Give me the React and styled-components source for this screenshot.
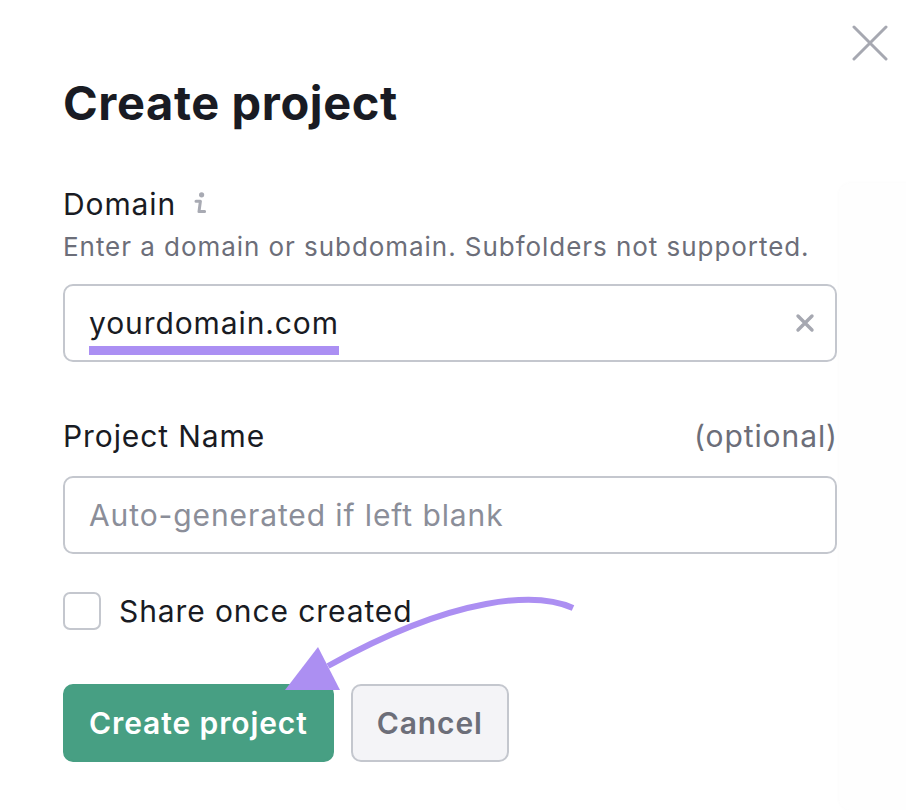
import React from "react";
import styled, { createGlobalStyle } from "styled-components";

const GlobalStyle = createGlobalStyle`
  html, body {
    margin: 0;
    padding: 0;
    background: #ffffff;
  }
  body {
    font-family: Inter, "Noto Sans", "Liberation Sans", sans-serif;
    color: #191b23;
    -webkit-font-smoothing: antialiased;
  }
`;

const CloseIcon = () => (
  <svg width="36" height="36" viewBox="0 0 36 36" fill="none">
    <path d="M2 2L34 34M34 2L2 34" stroke="#a6a8b1" strokeWidth="3" strokeLinecap="round" />
  </svg>
);

const ClearIcon = () => (
  <svg width="20" height="20" viewBox="0 0 20 20" fill="none">
    <path d="M3 3L17 17M17 3L3 17" stroke="#a6a8b1" strokeWidth="3.4" strokeLinecap="round" />
  </svg>
);

const InfoIcon = () => (
  <svg width="12" height="22" viewBox="0 0 12 22" fill="none">
    <circle cx="7.6" cy="2.8" r="2.6" fill="#a8aab3" />
    <path d="M2 9.2H6.4L5 19.6H10.6" stroke="#a8aab3" strokeWidth="3" strokeLinejoin="round" strokeLinecap="round" />
  </svg>
);

const Arrow = () => (
  <Styled.Overlay width="906" height="810" viewBox="0 0 906 810">
    <path d="M573 608C538 592 458 594 328 666" stroke="#ac8ff2" strokeWidth="6" fill="none" />
    <polygon points="285,690 318,647 340,690" fill="#ac8ff2" />
  </Styled.Overlay>
);

export default function App() {
  return (
    <>
      <GlobalStyle />
      <Styled.Page>
        <Styled.BackCard />
        <Styled.Close aria-label="Close">
          <CloseIcon />
        </Styled.Close>
        <Styled.Title>Create project</Styled.Title>

        <Styled.LabelRow $gap="56px">
          <Styled.Label>
            Domain
            <Styled.Info>
              <InfoIcon />
            </Styled.Info>
          </Styled.Label>
        </Styled.LabelRow>
        <Styled.Helper>Enter a domain or subdomain. Subfolders not supported.</Styled.Helper>
        <Styled.Field $gap="22px">
          <Styled.Value>yourdomain.com</Styled.Value>
          <Styled.Clear aria-label="Clear">
            <ClearIcon />
          </Styled.Clear>
        </Styled.Field>

        <Styled.LabelRow $gap="57px">
          <Styled.Label>Project Name</Styled.Label>
          <Styled.Optional>(optional)</Styled.Optional>
        </Styled.LabelRow>
        <Styled.Field $gap="23px">
          <Styled.Placeholder>Auto-generated if left blank</Styled.Placeholder>
        </Styled.Field>

        <Styled.CheckRow>
          <Styled.Checkbox />
          <Styled.CheckLabel>Share once created</Styled.CheckLabel>
        </Styled.CheckRow>

        <Styled.Actions>
          <Styled.Button $primary>Create project</Styled.Button>
          <Styled.Button>Cancel</Styled.Button>
        </Styled.Actions>

        <Arrow />
      </Styled.Page>
    </>
  );
}

const bodyText = `
  font-size: 30px;
  line-height: 34px;
  letter-spacing: 0.9px;
`;

const Styled = {
  Page: styled.div`
    position: relative;
    width: 906px;
    height: 810px;
    box-sizing: border-box;
    padding: 75px 69px 0 63px;
    display: flex;
    flex-direction: column;
    overflow: hidden;
  `,
  BackCard: styled.div`
    position: absolute;
    left: 839px;
    top: 183px;
    right: -20px;
    bottom: 0;
    background: #fefefe;
    border-radius: 12px;
    box-shadow: 0 0 4px rgba(0, 0, 0, 0.025);
    z-index: 0;
  `,
  Close: styled.div`
    position: absolute;
    top: 25px;
    right: 18px;
    width: 36px;
    height: 36px;
    display: flex;
  `,
  Title: styled.h1`
    margin: 0;
    font-size: 47px;
    line-height: 56px;
    font-weight: 700;
    color: #191b23;
    letter-spacing: 0.6px;
    position: relative;
  `,
  LabelRow: styled.div`
    display: flex;
    justify-content: space-between;
    align-items: center;
    margin-top: ${(props) => props.$gap};
    position: relative;
  `,
  Label: styled.div`
    display: flex;
    align-items: center;
    ${bodyText}
    font-weight: 400;
    color: #191b23;
  `,
  Info: styled.span`
    display: flex;
    margin-left: 18px;
    margin-top: -2px;
  `,
  Optional: styled.div`
    ${bodyText}
    margin-right: -0.9px;
    color: #6c6e79;
  `,
  Helper: styled.div`
    margin-top: 11px;
    font-size: 26px;
    line-height: 30px;
    letter-spacing: 0.95px;
    color: #6c6e79;
    position: relative;
  `,
  Field: styled.div`
    position: relative;
    margin-top: ${(props) => props.$gap};
    height: 78px;
    box-sizing: border-box;
    border: 2px solid #c4c7ce;
    border-radius: 10px;
    background: #ffffff;
    display: flex;
    align-items: center;
    justify-content: space-between;
    padding: 0 20px 0 24px;
  `,
  Value: styled.span`
    position: relative;
    ${bodyText}
    color: #191b23;

    &::after {
      content: "";
      position: absolute;
      left: 0;
      right: 0;
      bottom: -15px;
      height: 9px;
      background: #ab8ff3;
    }
  `,
  Placeholder: styled.span`
    ${bodyText}
    color: #8b8e99;
  `,
  Clear: styled.span`
    display: flex;
  `,
  CheckRow: styled.div`
    display: flex;
    align-items: center;
    gap: 18px;
    margin-top: 38px;
    position: relative;
  `,
  Checkbox: styled.span`
    width: 38px;
    height: 38px;
    box-sizing: border-box;
    border: 2px solid #c4c7ce;
    border-radius: 7px;
    background: #ffffff;
  `,
  CheckLabel: styled.span`
    ${bodyText}
    color: #191b23;
  `,
  Actions: styled.div`
    display: flex;
    gap: 17px;
    margin-top: 54px;
    position: relative;
  `,
  Button: styled.button`
    height: 78px;
    box-sizing: border-box;
    padding: 0 24px;
    border-radius: 10px;
    font-family: Inter, "Noto Sans", "Liberation Sans", sans-serif;
    ${bodyText}
    font-weight: 600;
    border: 2px solid ${(props) => (props.$primary ? "#479f83" : "#c4c7ce")};
    background: ${(props) => (props.$primary ? "#479f83" : "#f4f4f7")};
    color: ${(props) => (props.$primary ? "#ffffff" : "#6c6e79")};
    cursor: pointer;
  `,
  Overlay: styled.svg`
    position: absolute;
    left: 0;
    top: 0;
    pointer-events: none;
  `,
};
